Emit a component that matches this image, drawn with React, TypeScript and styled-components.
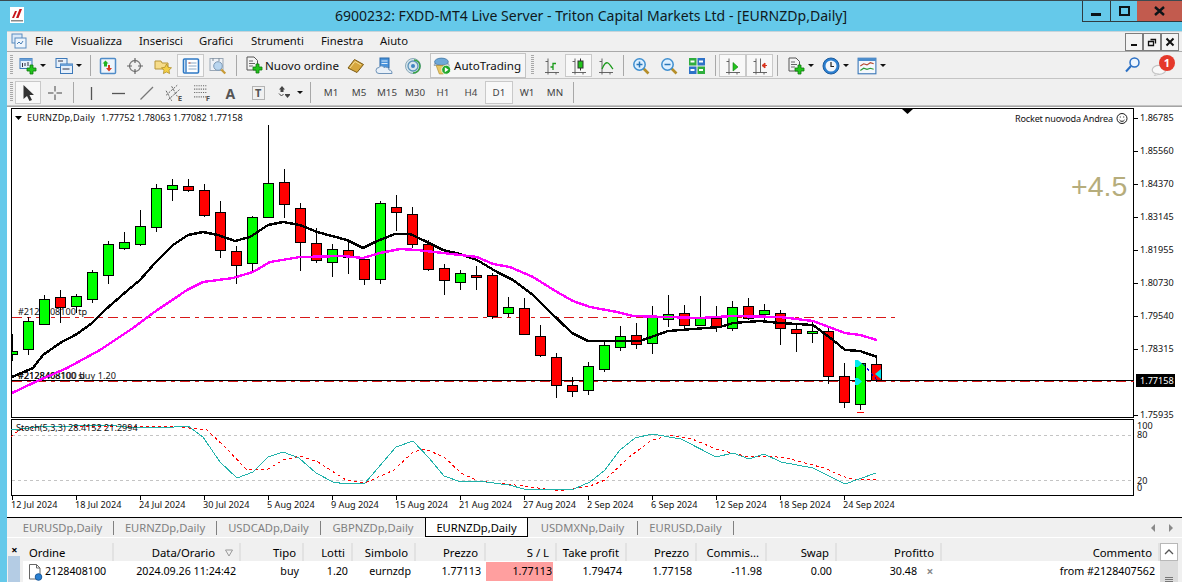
import React from 'react';
import styled, { createGlobalStyle } from 'styled-components';

const UI_FONT = '"Noto Sans", "Open Sans", "Liberation Sans", sans-serif';

const GlobalStyle = createGlobalStyle`
  html, body {
    margin: 0;
    padding: 0;
    width: 1182px;
    height: 582px;
    overflow: hidden;
    background: #65c9ea;
  }
  * { box-sizing: border-box; }
`;

const Win = styled.div`
  width: 1182px;
  height: 582px;
  overflow: hidden;
  display: flex;
  flex-direction: column;
  background: #65c9ea;
  border-top: 1px solid #3b4a50;
  font-family: ${UI_FONT};
  color: #000;
`;

const TitleBar = styled.div`
  height: 30px;
  flex: none;
  display: grid;
  grid-template-columns: 1fr auto 1fr;
  align-items: start;
`;

const LogoBox = styled.div`
  margin: 6px 0 0 10px;
  width: 14px;
  height: 16px;
  background: #fff;
  display: flex;
`;

const TitleText = styled.div`
  font-size: 14.05px;
  line-height: 29px;
  color: #10191d;
  white-space: nowrap;
`;

const WinButtons = styled.div`
  justify-self: end;
  display: flex;
  height: 21px;
`;

const WinButton = styled.div<{ $w: number; $close?: boolean }>`
  width: ${(p) => p.$w}px;
  height: 21px;
  display: flex;
  align-items: center;
  justify-content: center;
  border-bottom: 1px solid #2f3b40;
  border-left: ${(p) => (p.$close ? 'none' : '1px solid #2f3b40')};
  background: ${(p) => (p.$close ? '#c25b4e' : 'transparent')};
`;

const Client = styled.div`
  flex: 1;
  margin-left: 7px;
  background: #f0f0f0;
  display: flex;
  flex-direction: column;
  min-height: 0;
`;

const MenuBar = styled.div`
  height: 21px;
  flex: none;
  display: flex;
  align-items: center;
  padding-bottom: 2px;
  border-bottom: 1px solid #a9a9a9;
  border-top: 1px solid #c8d4da;
`;

const MenuIcon = styled.div`
  width: 28px;
  padding-left: 4px;
  display: flex;
`;

const MenuItem = styled.span<{ $w: number }>`
  width: ${(p) => p.$w}px;
  font-size: 11.3px;
  color: #111;
`;

const MdiButtons = styled.div`
  margin-left: auto;
  margin-right: 3px;
  margin-top: 2px;
  display: flex;
`;

const MdiButton = styled.div`
  width: 18px;
  height: 18px;
  border: 1px solid #7d7d7d;
  display: flex;
  align-items: center;
  justify-content: center;
  background: #f4f4f4;
`;

const ToolRow = styled.div`
  height: 27px;
  flex: none;
  display: flex;
  align-items: center;
  border-bottom: 1px solid #c4c4c4;
  padding-left: 1px;
`;

const Grip = styled.div<{ $w: number }>`
  width: ${(p) => p.$w}px;
  height: 20px;
  flex: none;
  display: flex;
  justify-content: center;
  &::before {
    content: '';
    width: 3px;
    height: 100%;
    background: repeating-linear-gradient(#a8a8a8 0 1px, transparent 1px 2px);
  }
`;

const Sep = styled.div`
  width: 8px;
  height: 21px;
  flex: none;
  display: flex;
  justify-content: center;
  &::before {
    content: '';
    width: 1px;
    height: 100%;
    background: #a8a8a8;
  }
`;

const Tool = styled.div<{ $w: number; $active?: boolean }>`
  width: ${(p) => p.$w}px;
  height: 23px;
  flex: none;
  display: flex;
  align-items: center;
  justify-content: center;
  gap: 3px;
  font-size: 9.8px;
  padding-top: 1px;
  color: #444;
  border: 1px solid ${(p) => (p.$active ? '#c9c9c9' : 'transparent')};
  background: ${(p) => (p.$active ? '#f8f8f8' : 'transparent')};
`;

const TimeframeGroup = styled.div`
  display: flex;
  align-items: center;
  margin-left: 3px;
`;

const Caret = styled.span`
  width: 0;
  height: 0;
  border-left: 3px solid transparent;
  border-right: 3px solid transparent;
  border-top: 3px solid #111;
`;

const OrderTool = styled.div`
  width: 102px;
  flex: none;
  display: flex;
  align-items: center;
  gap: 2px;
  padding-left: 5px;
  font-size: 11.6px;
  color: #111;
  white-space: nowrap;
`;

const AutoTradingTool = styled.div`
  width: 96px;
  height: 25px;
  margin-left: 3px;
  flex: none;
  display: flex;
  align-items: center;
  gap: 2px;
  padding-left: 2px;
  border: 1px solid #c4c4c4;
  background: #f6f6f6;
  font-size: 11.6px;
  color: #111;
`;

const RowEnd = styled.div`
  margin-left: auto;
  display: flex;
  align-items: center;
  gap: 9px;
  padding-right: 9px;
`;

const BadgeBox = styled.div`
  position: relative;
  width: 22px;
  height: 22px;
`;

const Badge = styled.span`
  position: absolute;
  right: -2px;
  top: 1px;
  width: 16px;
  height: 16px;
  border-radius: 50%;
  background: #e5392b;
  color: #fff;
  font-size: 11px;
  font-weight: 700;
  line-height: 16px;
  text-align: center;
`;

const ChartPanel = styled.div`
  flex: none;
  height: 411px;
  background: #fff;
  border-top: 1px solid #a4a4a4;
`;

const ChartSvg = styled.svg`
  display: block;
  width: 1175px;
  height: 410px;
`;

const AxisText = styled.text<{ $inverse?: boolean }>`
  font-family: ${UI_FONT};
  font-size: 9.1px;
  fill: ${(p) => (p.$inverse ? '#fff' : '#111')};
`;

const ProfitText = styled.text`
  font-family: "Liberation Sans", sans-serif;
  font-size: 28.5px;
  fill: #b6ad7c;
`;

const Crisp = styled.g`
  shape-rendering: crispEdges;
`;

const TabStrip = styled.div`
  height: 20px;
  flex: none;
  display: flex;
  align-items: stretch;
  padding-left: 1px;
  border-top: 1px solid #000;
  background: #f0f0f0;
`;

const Tab = styled.div<{ $w: number; $active?: boolean }>`
  width: ${(p) => p.$w}px;
  display: flex;
  align-items: center;
  justify-content: center;
  font-size: 11.2px;
  white-space: nowrap;
  color: ${(p) => (p.$active ? '#000' : '#808080')};
  background: ${(p) => (p.$active ? '#fff' : 'transparent')};
  border: ${(p) => (p.$active ? '1px solid #000' : 'none')};
  border-top: none;
  &:first-child {
    padding-left: 4px;
  }
`;

const TabSep = styled.div`
  width: 1px;
  height: 14px;
  align-self: center;
  background: #808080;
`;

const TabArrows = styled.div`
  margin-left: auto;
  padding-right: 9px;
  display: flex;
  align-items: center;
  gap: 14px;
`;

const TabArrow = styled.span<{ $left?: boolean }>`
  width: 0;
  height: 0;
  border-top: 4px solid transparent;
  border-bottom: 4px solid transparent;
  border-left: ${(p) => (p.$left ? 'none' : '4px solid #8a8a8a')};
  border-right: ${(p) => (p.$left ? '4px solid #8a8a8a' : 'none')};
`;

const TerminalPanel = styled.div`
  flex: 1;
  display: flex;
  padding-top: 5px;
  border-top: 1px solid #fff;
  min-height: 0;
`;

const SideStrip = styled.div`
  width: 16px;
  flex: none;
  display: flex;
  flex-direction: column;
  align-items: flex-start;
`;

const SideClose = styled.div`
  width: 13px;
  margin-left: 1px;
  height: 13px;
  font-size: 11px;
  line-height: 13px;
  font-weight: 700;
  text-align: center;
`;

const SideBar = styled.div`
  width: 12px;
  margin-left: 1px;
  flex: 1;
  background: #b4cce4;
`;

const Table = styled.div`
  width: 1137px;
  flex: none;
  background: #fff;
  display: grid;
  grid-template-columns: 91px 127px 63px 49px 63px 70px 71px 70px 70px 70px 70px 105px 218px;
  grid-template-rows: 18px 21px;
`;

const HeadCell = styled.div<{ $left?: boolean }>`
  background: #f0f0f0;
  border-right: 2px solid #e2e2e2;
  font-size: 11.3px;
  line-height: 18px;
  padding: 1px 6px 0;
  white-space: nowrap;
  display: flex;
  align-items: center;
  gap: 10px;
  justify-content: ${(p) => (p.$left ? 'flex-start' : 'flex-end')};
`;

const BodyCell = styled.div<{ $left?: boolean; $pink?: boolean }>`
  font-size: 10.7px;
  line-height: 19px;
  height: 19px;
  margin-top: 1px;
  margin-right: ${(p) => (p.$pink ? 4 : 0)}px;
  padding: 0 ${(p) => (p.$pink ? 1 : 5)}px 0 3px;
  white-space: nowrap;
  display: flex;
  align-items: center;
  gap: 1px;
  justify-content: ${(p) => (p.$left ? 'flex-start' : 'flex-end')};
  background: ${(p) => (p.$pink ? '#ff9f9f' : 'transparent')};
`;

const RemoveMark = styled.span`
  color: #8a8a8a;
  font-size: 12px;
  font-weight: 700;
  width: 14px;
  margin-left: 5px;
  text-align: center;
`;

const ScrollBar = styled.div`
  width: 18px;
  flex: none;
  display: flex;
  flex-direction: column;
  background: #dcdcdc;
`;

const ScrollUp = styled.div`
  height: 18px;
  background: #fff;
  border: 1px solid #b8b8b8;
  display: flex;
  align-items: center;
  justify-content: center;
`;

const ScrollThumb = styled.div`
  margin: auto 5px 0;
  height: 5px;
  background: repeating-linear-gradient(#777 0 1px, transparent 1px 2px);
`;

// ------ chart data, all in screen pixels ------

// [index, bodyTop, bodyBottom, wickTop, wickBottom, up]
const candles: [number, number, number, number, number, boolean][] = [
  [0, 351, 354, 334, 361, true],
  [1, 321, 349, 317, 355, true],
  [2, 299, 324, 295, 325, true],
  [3, 297, 307, 290, 323, false],
  [4, 296, 306, 294, 313, true],
  [5, 272, 299, 270, 303, true],
  [6, 244, 275, 241, 284, true],
  [7, 242, 248, 232, 250, true],
  [8, 226, 244, 210, 246, true],
  [9, 188, 227, 184, 232, true],
  [10, 185, 189, 179, 201, true],
  [11, 186, 190, 179, 192, false],
  [12, 190, 215, 184, 217, false],
  [13, 212, 250, 201, 258, false],
  [14, 251, 265, 246, 284, false],
  [15, 217, 263, 216, 272, true],
  [16, 183, 217, 125, 218, true],
  [17, 182, 204, 169, 218, false],
  [18, 208, 242, 203, 271, false],
  [19, 243, 260, 228, 263, false],
  [20, 249, 262, 244, 277, true],
  [21, 250, 257, 241, 274, false],
  [22, 259, 279, 257, 285, false],
  [23, 203, 279, 201, 284, true],
  [24, 207, 212, 195, 231, false],
  [25, 214, 244, 207, 248, false],
  [26, 244, 269, 240, 271, false],
  [27, 268, 280, 264, 295, false],
  [28, 273, 282, 270, 290, true],
  [29, 275, 277, 266, 290, false],
  [30, 275, 316, 273, 319, false],
  [31, 307, 313, 297, 317, true],
  [32, 308, 334, 298, 335, false],
  [33, 336, 355, 325, 357, false],
  [34, 357, 385, 353, 398, false],
  [35, 385, 391, 377, 397, false],
  [36, 366, 390, 362, 395, true],
  [37, 345, 369, 340, 372, true],
  [38, 336, 347, 326, 351, true],
  [39, 335, 344, 323, 349, false],
  [40, 316, 343, 306, 354, true],
  [41, 314, 319, 295, 327, true],
  [42, 313, 325, 305, 330, false],
  [43, 318, 325, 296, 325, true],
  [44, 318, 327, 306, 332, false],
  [45, 307, 328, 301, 331, true],
  [46, 306, 318, 298, 320, false],
  [47, 310, 314, 304, 323, true],
  [48, 313, 328, 310, 345, false],
  [49, 329, 333, 323, 352, false],
  [50, 331, 333, 322, 343, true],
  [51, 331, 376, 327, 384, false],
  [52, 376, 402, 363, 408, false],
  [53, 363, 404, 363, 410, true],
  [54, 364, 380, 355, 382, false],
];

const blackMa =
  '12,377 33,368 43,355 60,343 77,334 92,323 105,310 128,290 140,280 155,263 173,245 188,235 203,232 218,235 235,241 250,237 268,225 283,222 300,225 317,232 347,240 363,248 377,241 395,234 410,234 427,242 443,250 460,254 477,260 497,272 513,280 533,295 548,310 572,333 588,341 640,341 668,331 693,329 720,327 733,323 760,321 780,323 813,325 833,340 845,350 860,351 877,357';

const magentaMa =
  '12,393 33,383 67,368 100,350 133,328 153,313 187,290 203,282 233,278 253,272 270,262 300,257 343,256 363,258 380,253 400,249 417,250 443,253 477,257 493,264 510,267 533,277 557,292 573,301 590,307 617,312 633,316 700,318 733,316 780,317 813,321 845,333 860,335 877,340';

const stochMain =
  '11,430 38,427 107,425 126,427 161,428 188,426 203,437 220,462 237,478 253,472 268,457 283,452 299,458 316,473 333,482 346,484 365,483 396,447 413,441 429,458 444,476 461,482 478,481 509,485 524,489 547,489 553,490 574,489 590,482 605,470 620,450 635,438 652,434 681,439 716,457 733,453 749,459 764,454 781,462 813,468 845,484 876,473';

const stochSignal =
  '11,437 19,430 46,426 138,426 180,427 207,430 226,448 247,470 268,469 283,460 300,456 318,462 346,480 365,483 394,470 413,452 425,449 444,457 461,473 478,481 524,486 559,491 578,488 590,486 605,480 628,458 652,440 671,435 692,439 716,449 749,457 771,456 790,459 824,468 845,477 858,480 876,479';

const priceLabels: [number, string][] = [
  [118, '1.86785'],
  [151, '1.85560'],
  [184, '1.84370'],
  [217, '1.83145'],
  [250, '1.81955'],
  [283, '1.80730'],
  [316, '1.79540'],
  [349, '1.78315'],
  [415, '1.75935'],
];

const timeLabels = [
  '12 Jul 2024', '18 Jul 2024', '24 Jul 2024', '30 Jul 2024', '5 Aug 2024', '9 Aug 2024', '15 Aug 2024',
  '21 Aug 2024', '27 Aug 2024', '2 Sep 2024', '6 Sep 2024', '12 Sep 2024', '18 Sep 2024', '24 Sep 2024',
];

const stochScale: [number, string][] = [
  [429, '100'],
  [438, '80'],
  [484, '20'],
  [491, '0'],
];

const Chart = () => (
  <ChartSvg viewBox="7 107 1175 410">
    <defs>
      <clipPath id="plot">
        <rect x="12" y="109" width="1122" height="308" />
      </clipPath>
    </defs>
    <Crisp fill="none">
      <rect x="11.5" y="108.5" width="1122" height="309" stroke="#000" />
      <rect x="11.5" y="419.5" width="1122" height="76" stroke="#000" />
      <line x1="12" x2="1134" y1="380.5" y2="380.5" stroke="#000" />
      <line x1="12" x2="1134" y1="381.5" y2="381.5" stroke="#d81818" strokeDasharray="10 5 4 5" />
      <line x1="12" x2="895" y1="317.5" y2="317.5" stroke="#d81818" strokeDasharray="10 5 4 5" />
      <line x1="12" x2="1134" y1="435.5" y2="435.5" stroke="#c4c4c4" strokeDasharray="3 3" />
      <line x1="12" x2="1134" y1="480.5" y2="480.5" stroke="#c4c4c4" strokeDasharray="3 3" />
      {priceLabels.map(([y]) => (
        <line key={y} x1="1134" x2="1138" y1={y + 0.5} y2={y + 0.5} stroke="#000" />
      ))}
      {timeLabels.map((_, i) => (
        <line key={i} x1={12.5 + i * 64} x2={12.5 + i * 64} y1="496" y2="500" stroke="#000" />
      ))}
    </Crisp>

    <AxisText x="18" y="315">#2128408100 tp</AxisText>
    <AxisText x="18" y="379">#2128408100 sl</AxisText>
    <AxisText x="18" y="379" textLength="98">#2128408100 buy 1.20</AxisText>

    <Crisp clipPath="url(#plot)">
      {candles.map(([i, top, bottom, wickTop, wickBottom, up]) => {
        const x = 12 + i * 16;
        return (
          <g key={i}>
            <rect x={x} y={wickTop} width="1" height={wickBottom - wickTop} fill="#000" />
            <rect
              x={x - 4.5}
              y={top + 0.5}
              width="10"
              height={bottom - top}
              fill={up ? '#00ff00' : '#ff0000'}
              stroke="#000"
            />
          </g>
        );
      })}
      <rect x="857" y="412" width="7" height="1" fill="#ff0000" />
      <polyline points={blackMa} fill="none" stroke="#000" strokeWidth="2.4" />
      <polyline points={magentaMa} fill="none" stroke="#ff00ff" strokeWidth="2.4" />
      <line x1="863" y1="364" x2="878" y2="381" stroke="#0000dd" strokeDasharray="3 3" />
    </Crisp>

    <path d="M855 360h3l4 3.500-4 3.500h-3z M855 378h3l4 3.500-4 3.500h-3z" fill="#00e8f0" />
    <path d="M881 369v10l-6-5z" fill="#00e8f0" />

    <AxisText x="27" y="120.500" textLength="68">EURNZDp,Daily</AxisText>
    <AxisText x="101" y="120.500">1.77752 1.78063 1.77082 1.77158</AxisText>
    <path d="M15 116h7l-3.500 4z" fill="#000" />
    <path d="M902 109h11l-5.500 5z" fill="#000" />
    <AxisText x="1015" y="121.500" textLength="98">Rocket nuovoda Andrea</AxisText>
    <g fill="none" stroke="#000" strokeWidth="0.9">
      <circle cx="1122" cy="118.500" r="5" />
      <path d="M1119.500 120c1 1.800 4 1.800 5 0" />
      <path d="M1120.300 116.500v1M1123.700 116.500v1" />
    </g>
    <ProfitText x="1071" y="196">+4.5</ProfitText>

    {priceLabels.map(([y, label]) => (
      <AxisText key={y} x="1140" y={y + 3}>{label}</AxisText>
    ))}
    <rect x="1136" y="374" width="39" height="13" fill="#000" />
    <AxisText x="1140" y="384" $inverse>1.77158</AxisText>

    <Crisp fill="none">
      <polyline points={stochSignal} stroke="#ff0000" strokeDasharray="3 3" />
      <polyline points={stochMain} stroke="#20b2aa" />
    </Crisp>
    <AxisText x="16" y="431">Stoch(5,3,3) 28.4152 21.2994</AxisText>
    {stochScale.map(([y, label]) => (
      <AxisText key={label} x="1137" y={y}>{label}</AxisText>
    ))}
    {timeLabels.map((label, i) => (
      <AxisText key={label} x={11 + i * 64} y="508">{label}</AxisText>
    ))}
  </ChartSvg>
);

// ------ toolbar icons ------

const Ico = ({ s = 18, children }: { s?: number; children: React.ReactNode }) => (
  <svg width={s} height={s} viewBox="0 0 18 18" style={{ flex: 'none', display: 'block' }}>
    {children}
  </svg>
);

const GreenPlus = ({ x = 9, y = 9 }: { x?: number; y?: number }) => (
  <path
    transform={`translate(${x} ${y})`}
    d="M3 0h3v3h3v3H6v3H3V6H0V3h3z"
    fill="#22c41c"
    stroke="#0d7a0d"
    strokeWidth="0.8"
  />
);

const NewChartIcon = () => (
  <Ico>
    <rect x="1" y="1.500" width="12" height="10" fill="#e6f0fb" stroke="#3c78b8" />
    <rect x="1" y="1.500" width="12" height="2.500" fill="#6a9fd6" />
    <path d="M3.500 6v4M6 6v3M9 5v4" stroke="#334" />
    <GreenPlus x={8} y={8} />
  </Ico>
);

const ProfilesIcon = () => (
  <Ico>
    <rect x="1" y="1.500" width="11" height="9" fill="#e6f0fb" stroke="#3c78b8" />
    <rect x="5.500" y="7" width="12" height="9.500" fill="#e6f0fb" stroke="#3c78b8" />
    <rect x="5.500" y="7" width="12" height="2" fill="#6a9fd6" />
    <path d="M3 4h5M7.500 12h7" stroke="#334" />
  </Ico>
);

const MarketWatchIcon = () => (
  <Ico>
    <rect x="1.500" y="1.500" width="15" height="15" rx="1" fill="#eef5fc" stroke="#4f8cc8" strokeWidth="1.500" />
    <path d="M6.500 3.500l3 3H8v3H5v-3H3.500z" fill="#22b422" />
    <path d="M11 8v3h2l-3 3.500-3-3.500h2V8z" fill="#d83a22" />
  </Ico>
);

const NavigatorIcon = () => (
  <Ico>
    <circle cx="9" cy="9" r="5.500" fill="none" stroke="#7a7a7a" strokeWidth="1.300" />
    <path d="M9 1v5M9 12v5M1 9h5M12 9h5" stroke="#666" strokeWidth="1.200" />
  </Ico>
);

const FavoritesIcon = () => (
  <Ico>
    <path d="M1 4h6l1 2h6v6H1z" fill="#f6dc8a" stroke="#b69436" />
    <path d="M12.500 7l1.600 3.300 3.400.5-2.500 2.400.6 3.400-3.100-1.600-3.100 1.600.6-3.400-2.500-2.400 3.400-.5z" fill="#f4cf45" stroke="#a98620" strokeWidth="0.7" />
  </Ico>
);

const TerminalIcon = () => (
  <Ico>
    <rect x="1.500" y="2" width="15" height="14" rx="1" fill="#fff" stroke="#2e78c4" strokeWidth="1.600" />
    <path d="M4 2.500v13" stroke="#2e78c4" strokeWidth="1.400" />
    <path d="M6.500 6h8M6.500 9h8M6.500 12h8" stroke="#8aa9c6" />
    <path d="M6.500 6h2" stroke="#d24a2e" />
  </Ico>
);

const TesterIcon = () => (
  <Ico>
    <rect x="1" y="1.500" width="13" height="12" fill="#edf1f6" stroke="#9aa7b5" />
    <path d="M4 1v3M10 1v3" stroke="#7f8c99" />
    <circle cx="9" cy="9" r="4.300" fill="#b8d5ef" stroke="#7f9ab5" />
    <path d="M12.300 12.500l4 4" stroke="#c79a35" strokeWidth="2.200" />
  </Ico>
);

const NewOrderIcon = () => (
  <Ico>
    <path d="M2 1h7l3.500 3.500V14H2z" fill="#f4f4f4" stroke="#555" />
    <path d="M4 5h4M4 7.500h6M4 10h4" stroke="#666" />
    <GreenPlus x={8} y={8} />
  </Ico>
);

const EditorIcon = () => (
  <Ico>
    <path d="M1 11l6.500-8.500 9 5L10 15.500z" fill="#d6a73e" stroke="#7a5a14" />
    <path d="M3 11l5-6.500 6 3.500" fill="none" stroke="#f4dc96" />
  </Ico>
);

const CloudIcon = () => (
  <Ico>
    <rect x="5" y="1" width="9" height="10" fill="#4a94dc" stroke="#2b68a8" />
    <path d="M6.500 4h6M6.500 6.500h6" stroke="#dcecfa" />
    <path d="M4 16.500a3 3 0 0 1 0-6c1-2 4-2 5 0 2-1 5 0 5 2.500 2 0 3 1 3 3.500z" fill="#e8f0f8" stroke="#6f93b8" />
  </Ico>
);

const SignalIcon = () => (
  <Ico>
    <circle cx="9" cy="9" r="7.500" fill="#d8e6ee" stroke="#8aa9b8" />
    <circle cx="9" cy="9" r="5" fill="none" stroke="#5c93b8" strokeWidth="1.300" />
    <path d="M10 3a6 6 0 0 1 6 6M9 16a7 7 0 0 0 7-7" fill="none" stroke="#39a245" strokeWidth="1.500" />
    <circle cx="9" cy="9" r="2" fill="#3e86c2" />
  </Ico>
);

const AutoIcon = () => (
  <Ico s={19}>
    <ellipse cx="8" cy="5.500" rx="6.500" ry="3.500" fill="#6fa9d8" stroke="#3b6f9d" strokeWidth="0.7" />
    <path d="M1.500 7c3 2 10 2 13 0l1 2H1z" fill="#b7c9d8" stroke="#6d7f90" strokeWidth="0.5" />
    <path d="M3 9h10l1 4-4 4H6z" fill="#e9c767" stroke="#a98a2e" strokeWidth="0.6" />
    <circle cx="12.500" cy="13" r="4.300" fill="#22a82a" stroke="#fff" strokeWidth="0.8" />
    <path d="M11.200 10.700l3.500 2.300-3.500 2.300z" fill="#fff" />
  </Ico>
);

const AxisFrame = () => (
  <path d="M5 1.500v14M2.500 4.500h2.500M2 15.500h14M5 15.500v2M13 15.500v2" stroke="#555" fill="none" strokeWidth="0.9" />
);

const BarsIcon = () => (
  <Ico>
    <AxisFrame />
    <path d="M10 13V6.500h3M10 10H7.500" stroke="#1a9a1a" strokeWidth="1.300" fill="none" />
  </Ico>
);

const CandlesIcon = () => (
  <Ico>
    <AxisFrame />
    <path d="M10.500 1.500v12" stroke="#333" />
    <rect x="8" y="4" width="5" height="7" fill="#22c41c" stroke="#333" />
  </Ico>
);

const LineIcon = () => (
  <Ico>
    <AxisFrame />
    <path d="M5 12c2-5 4-7 6-6s3 4 5 6" stroke="#1a9a1a" strokeWidth="1.300" fill="none" />
  </Ico>
);

const Magnifier = ({ minus }: { minus?: boolean }) => (
  <Ico>
    <path d="M11.500 11.500l5 5" stroke="#b58e2a" strokeWidth="2.600" />
    <circle cx="7.500" cy="7.500" r="5.700" fill="#dcefff" stroke="#3f8fd0" strokeWidth="1.500" />
    <path d={minus ? 'M4.500 7.500h6' : 'M4.500 7.500h6M7.500 4.500v6'} stroke="#2a76b8" strokeWidth="1.500" />
  </Ico>
);

const TileIcon = () => (
  <Ico>
    <rect x="1" y="1" width="7.500" height="7.500" fill="#2fae3e" />
    <rect x="9.500" y="1" width="7.500" height="7.500" fill="#2e72c8" />
    <rect x="1" y="9.500" width="7.500" height="7.500" fill="#2e72c8" />
    <rect x="9.500" y="9.500" width="7.500" height="7.500" fill="#2fae3e" />
    <path d="M2.500 4.500h4M11 4.500h4M2.500 13h4M11 13h4" stroke="#fff" strokeWidth="2" />
  </Ico>
);

const AutoScrollIcon = () => (
  <Ico>
    <AxisFrame />
    <path d="M9 5.500l5 4.500-5 4z" fill="#22c41c" stroke="#0d7a0d" strokeWidth="0.6" />
  </Ico>
);

const ShiftIcon = () => (
  <Ico>
    <AxisFrame />
    <path d="M9.500 1.500v14" stroke="#555" strokeWidth="0.9" />
    <path d="M16 8.500h-3.500M14 6l-3 2.500 3 2.500z" stroke="#d8341e" fill="#d8341e" />
  </Ico>
);

const ClockIcon = () => (
  <Ico>
    <circle cx="9" cy="9" r="8" fill="#2b7fd0" stroke="#1d5c9e" />
    <circle cx="9" cy="9" r="5.500" fill="#f2f6fa" />
    <path d="M9 5v4.500h3" stroke="#222" strokeWidth="1.200" fill="none" />
  </Ico>
);

const TemplateIcon = () => (
  <Ico s={20}>
    <rect x="1" y="2" width="16" height="14" fill="#f4f8fc" stroke="#3c78b8" />
    <rect x="1" y="2" width="16" height="2.500" fill="#4a8ccc" />
    <path d="M3 9l3-2 3 1 3-2 3 1" stroke="#b5482e" fill="none" />
    <path d="M3 13l3-2 3 1 3-1 3 1" stroke="#2a9a36" fill="none" />
  </Ico>
);

const CursorIcon = () => (
  <Ico>
    <path d="M4.500 1v14l3.500-3 2.500 5 2.500-1-2.500-5H15z" fill="#333" />
  </Ico>
);

const CrossIcon = () => (
  <Ico>
    <path d="M9 2v5.500M9 10.500V16M2 9h5.500M10.500 9H16" stroke="#444" />
  </Ico>
);

const VLineIcon = () => (
  <Ico>
    <path d="M9.500 3v13" stroke="#555" strokeWidth="1.300" />
  </Ico>
);

const HLineIcon = () => (
  <Ico>
    <path d="M2 9.500h13" stroke="#555" strokeWidth="1.300" />
  </Ico>
);

const TrendIcon = () => (
  <Ico>
    <path d="M2.500 15.500L15 3" stroke="#777" strokeWidth="1.300" />
  </Ico>
);

const ChannelIcon = () => (
  <Ico s={20}>
    <path d="M1 11L11 2M3 15L13 6M1 7l5 9M6 3l5 9" stroke="#666" strokeWidth="0.9" strokeDasharray="2 1" />
    <text x="11.500" y="16.500" fontSize="7" fontWeight="700" fill="#555" fontFamily="Noto Sans">E</text>
  </Ico>
);

const FiboIcon = () => (
  <Ico s={20}>
    <path d="M1 2.500h12M1 5.500h12M1 8.500h12M1 12.500h12" stroke="#666" strokeDasharray="1 1" />
    <text x="11.500" y="16.500" fontSize="7" fontWeight="700" fill="#555" fontFamily="Noto Sans">F</text>
  </Ico>
);

const TextIcon = () => (
  <Ico>
    <text x="3.500" y="14.500" fontSize="14" fontWeight="700" fill="#555" fontFamily="Noto Sans">A</text>
  </Ico>
);

const LabelIcon = () => (
  <Ico>
    <rect x="2.500" y="2.500" width="12" height="13" fill="none" stroke="#777" strokeDasharray="1 1" />
    <text x="5" y="13" fontSize="11" fontWeight="700" fill="#555" fontFamily="Noto Sans">T</text>
  </Ico>
);

const ArrowsIcon = () => (
  <Ico>
    <path d="M6 2l3 3.500H7.500V8h-3V5.500H3z" fill="#444" />
    <path d="M3 9.500l2.500 2.500 2-2" stroke="#444" fill="none" />
    <path d="M9 11h5l-2.500 3z" fill="#444" />
    <path d="M9 10.500h5" stroke="#444" />
  </Ico>
);

const SearchIcon = () => (
  <Ico>
    <circle cx="10.500" cy="6.500" r="4.500" fill="#eef6ff" stroke="#2a6fc4" strokeWidth="1.500" />
    <path d="M7 10l-5 5.500" stroke="#2a6fc4" strokeWidth="2" />
  </Ico>
);

const BubbleIcon = () => (
  <Ico s={22}>
    <ellipse cx="6.500" cy="13" rx="5.500" ry="3.700" fill="#f8f8f8" stroke="#c4c4c4" />
    <path d="M4 16l-1.500 2 4-1.500z" fill="#f0f0f0" stroke="#c4c4c4" strokeWidth="0.6" />
  </Ico>
);

const timeframes = ['M1', 'M5', 'M15', 'M30', 'H1', 'H4', 'D1', 'W1', 'MN'];

const menus: [string, number][] = [
  ['File', 36],
  ['Visualizza', 68],
  ['Inserisci', 60],
  ['Grafici', 52],
  ['Strumenti', 70],
  ['Finestra', 59],
  ['Aiuto', 40],
];

const tabs: [string, number, boolean][] = [
  ['EURUSDp,Daily', 105, false],
  ['EURNZDp,Daily', 102, false],
  ['USDCADp,Daily', 103, false],
  ['GBPNZDp,Daily', 104, false],
  ['EURNZDp,Daily', 103, true],
  ['USDMXNp,Daily', 109, false],
  ['EURUSD,Daily', 95, false],
];

const heads = [
  'Data/Orario', 'Tipo', 'Lotti', 'Simbolo', 'Prezzo', 'S / L', 'Take profit', 'Prezzo', 'Commis...', 'Swap', 'Profitto', 'Commento',
];

const OrderFileIcon = () => (
  <Ico>
    <path d="M3.500 1.500h7l3.500 3.500v11h-10.500z" fill="#fff" stroke="#666" />
    <path d="M10.500 1.500V5H14" fill="none" stroke="#666" />
    <circle cx="12.500" cy="14" r="3.300" fill="#2a7fd0" stroke="#1c5c9e" />
  </Ico>
);

const App = () => (
  <Win>
    <GlobalStyle />
    <TitleBar>
      <LogoBox>
        <svg width="14" height="16" viewBox="0 0 14 16">
          <path d="M2 11L5 4h2L4 11zM6 11l3.500-9H12L8.500 11z" fill="#c8161c" />
          <path d="M1 13h12v1.500H1z" fill="#888" />
        </svg>
      </LogoBox>
      <TitleText>6900232: FXDD-MT4 Live Server - Triton Capital Markets Ltd - [EURNZDp,Daily]</TitleText>
      <WinButtons>
        <WinButton $w={28}>
          <svg width="11" height="10" viewBox="0 0 11 10"><rect y="7" width="10" height="3" fill="#0c1418" /></svg>
        </WinButton>
        <WinButton $w={27}>
          <svg width="11" height="10" viewBox="0 0 11 10"><rect x="1" y="1" width="9" height="8" fill="none" stroke="#0c1418" strokeWidth="2" /></svg>
        </WinButton>
        <WinButton $w={45} $close>
          <svg width="11" height="10" viewBox="0 0 11 10"><path d="M1 1l9 8M10 1l-9 8" stroke="#0c1418" strokeWidth="2.400" /></svg>
        </WinButton>
      </WinButtons>
    </TitleBar>

    <Client>
      <MenuBar>
        <MenuIcon>
          <svg width="16" height="16" viewBox="0 0 16 16">
            <rect x="1" y="1" width="10" height="9" fill="#dbe9f8" stroke="#5a8cc0" />
            <rect x="4" y="5" width="11" height="10" fill="#eef5fc" stroke="#5a8cc0" />
            <path d="M6 11l2-2 2 2 2-3" stroke="#4a7fb5" fill="none" />
          </svg>
        </MenuIcon>
        {menus.map(([label, w]) => (
          <MenuItem key={label} $w={w}>{label}</MenuItem>
        ))}
        <MdiButtons>
          <MdiButton>
            <svg width="10" height="10" viewBox="0 0 10 10"><rect x="2" y="7" width="6" height="2" fill="#111" /></svg>
          </MdiButton>
          <MdiButton>
            <svg width="10" height="10" viewBox="0 0 10 10"><path d="M3.500 2.500h5v4M1.500 4.500h5v4h-5z" fill="none" stroke="#111" strokeWidth="1.300" /></svg>
          </MdiButton>
          <MdiButton>
            <svg width="10" height="10" viewBox="0 0 10 10"><path d="M1.500 1.500l7 7M8.500 1.500l-7 7" stroke="#111" strokeWidth="2" /></svg>
          </MdiButton>
        </MdiButtons>
      </MenuBar>

      <ToolRow>
        <Grip $w={6} />
        <Tool $w={36}><NewChartIcon /><Caret /></Tool>
        <Tool $w={36}><ProfilesIcon /><Caret /></Tool>
        <Sep />
        <Tool $w={27}><MarketWatchIcon /></Tool>
        <Tool $w={28}><NavigatorIcon /></Tool>
        <Tool $w={28}><FavoritesIcon /></Tool>
        <Tool $w={27} $active><TerminalIcon /></Tool>
        <Tool $w={28}><TesterIcon /></Tool>
        <Sep />
        <OrderTool><NewOrderIcon />Nuovo ordine</OrderTool>
        <Tool $w={28}><EditorIcon /></Tool>
        <Tool $w={28}><CloudIcon /></Tool>
        <Tool $w={29}><SignalIcon /></Tool>
        <AutoTradingTool><AutoIcon />AutoTrading</AutoTradingTool>
        <Grip $w={12} />
        <Tool $w={27}><BarsIcon /></Tool>
        <Tool $w={27} $active><CandlesIcon /></Tool>
        <Tool $w={27}><LineIcon /></Tool>
        <Sep />
        <Tool $w={28}><Magnifier /></Tool>
        <Tool $w={28}><Magnifier minus /></Tool>
        <Tool $w={28}><TileIcon /></Tool>
        <Sep />
        <Tool $w={27} $active><AutoScrollIcon /></Tool>
        <Tool $w={27} $active><ShiftIcon /></Tool>
        <Sep />
        <Tool $w={38}><NewOrderIcon /><Caret /></Tool>
        <Tool $w={33}><ClockIcon /><Caret /></Tool>
        <Tool $w={38}><TemplateIcon /><Caret /></Tool>
        <RowEnd>
          <SearchIcon />
          <BadgeBox>
            <BubbleIcon />
            <Badge>1</Badge>
          </BadgeBox>
        </RowEnd>
      </ToolRow>

      <ToolRow>
        <Grip $w={7} />
        <Tool $w={26} $active><CursorIcon /></Tool>
        <Tool $w={28}><CrossIcon /></Tool>
        <Sep />
        <Tool $w={28}><VLineIcon /></Tool>
        <Tool $w={28}><HLineIcon /></Tool>
        <Tool $w={28}><TrendIcon /></Tool>
        <Tool $w={28}><ChannelIcon /></Tool>
        <Tool $w={28}><FiboIcon /></Tool>
        <Tool $w={28}><TextIcon /></Tool>
        <Tool $w={28}><LabelIcon /></Tool>
        <Tool $w={33}><ArrowsIcon /><Caret /></Tool>
        <Sep />
        <TimeframeGroup>
          {timeframes.map((tf) => (
            <Tool key={tf} $w={28} $active={tf === 'D1'}>{tf}</Tool>
          ))}
        </TimeframeGroup>
        <Sep />
      </ToolRow>

      <ChartPanel>
        <Chart />
      </ChartPanel>

      <TabStrip>
        {tabs.map(([label, w, active], i) => (
          <React.Fragment key={i}>
            <Tab $w={w} $active={active}>{label}</Tab>
            {!active && !tabs[i + 1]?.[2] && <TabSep />}
          </React.Fragment>
        ))}
        <TabArrows>
          <TabArrow $left />
          <TabArrow />
        </TabArrows>
      </TabStrip>

      <TerminalPanel>
        <SideStrip>
          <SideClose>×</SideClose>
          <SideBar />
        </SideStrip>
        <Table>
          <HeadCell $left>Ordine</HeadCell>
          {heads.map((h, i) => (
            <HeadCell key={i}>
              {h}
              {h === 'Data/Orario' && (
                <svg width="8" height="8" viewBox="0 0 8 8"><path d="M.5 1h7L4 7z" fill="none" stroke="#999" /></svg>
              )}
            </HeadCell>
          ))}
          <BodyCell $left><OrderFileIcon />2128408100</BodyCell>
          <BodyCell>2024.09.26 11:24:42</BodyCell>
          <BodyCell>buy</BodyCell>
          <BodyCell>1.20</BodyCell>
          <BodyCell>eurnzdp</BodyCell>
          <BodyCell>1.77113</BodyCell>
          <BodyCell $pink>1.77113</BodyCell>
          <BodyCell>1.79474</BodyCell>
          <BodyCell>1.77158</BodyCell>
          <BodyCell>-11.98</BodyCell>
          <BodyCell>0.00</BodyCell>
          <BodyCell>30.48<RemoveMark>×</RemoveMark></BodyCell>
          <BodyCell>from #2128407562</BodyCell>
        </Table>
        <ScrollBar>
          <ScrollUp>
            <svg width="10" height="6" viewBox="0 0 10 6"><path d="M1 5l4-4 4 4" fill="none" stroke="#555" strokeWidth="1.300" /></svg>
          </ScrollUp>
          <ScrollThumb />
        </ScrollBar>
      </TerminalPanel>
    </Client>
  </Win>
);

export default App;
